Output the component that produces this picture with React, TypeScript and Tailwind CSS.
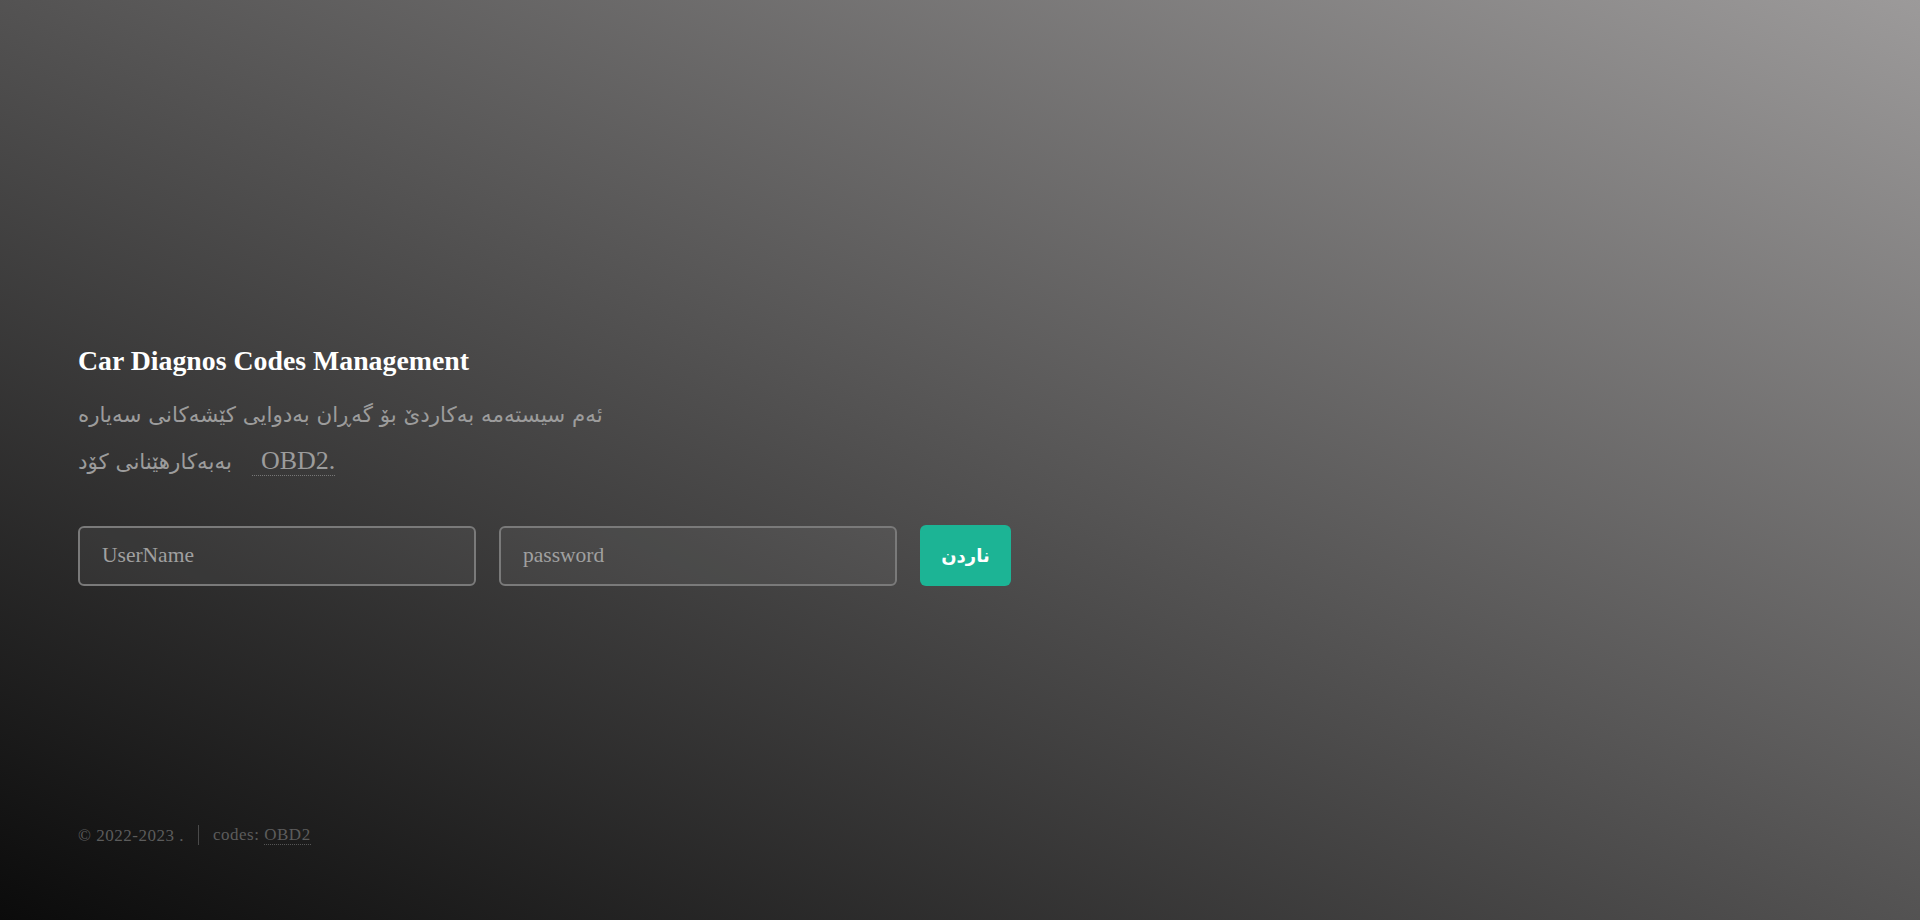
export default function App() {
  return (
    <div className="flex h-[920px] w-full flex-col bg-[linear-gradient(to_top_right,#0b0b0b,#9c9a9a)] pl-[78px] font-['Liberation_Serif','DejaVu_Sans',serif]">
      <main className="flex flex-1 flex-col pt-[343px]">
        <h1 className="text-[27.8px] font-bold leading-[36px] text-white">Car Diagnos Codes Management</h1>
        <p className="mt-[12px] w-[548px] text-[26px] leading-[46px] text-[#9c9c9c]">
          <span className="font-['DejaVu_Sans',sans-serif] text-[21.4px]">
            ئەم سیستەمە بەکاردێ بۆ گەڕان بەدوایی کێشەکانی سەیارە بەبەکارهێنانی کۆد
          </span>
          <a className="ml-[20px] border-b border-dotted border-[#777] pl-[9px] text-[#9c9c9c]">OBD2.</a>
        </p>
        <form className="mt-[40px] flex items-center gap-[23px]">
          <input
            type="text"
            placeholder="UserName"
            className="h-[60px] w-[398px] rounded-[6px] border-2 border-[#7a7a7a] bg-white/5 px-[22px] text-[21.5px] text-white outline-none placeholder:text-[#a0a0a0]"
          />
          <input
            type="password"
            placeholder="password"
            className="h-[60px] w-[398px] rounded-[6px] border-2 border-[#7a7a7a] bg-white/5 px-[22px] text-[21.5px] text-white outline-none placeholder:text-[#a0a0a0]"
          />
          <button
            type="button"
            className="h-[61px] w-[91px] rounded-[6px] bg-[#1cb495] font-['DejaVu_Sans',sans-serif] text-[18px] font-bold text-white"
          >
            ناردن
          </button>
        </form>
      </main>
      <footer className="flex items-center pb-[72px] text-[17px] tracking-[0.03em] text-[#5c5c5c]">
        <span className="pr-[14px]">© 2022-2023 .</span>
        <span className="border-l border-[#4a4a4a] pl-[14px] leading-[20px]">
          codes: <a className="border-b border-dotted border-[#555]">OBD2</a>
        </span>
      </footer>
    </div>
  )
}
